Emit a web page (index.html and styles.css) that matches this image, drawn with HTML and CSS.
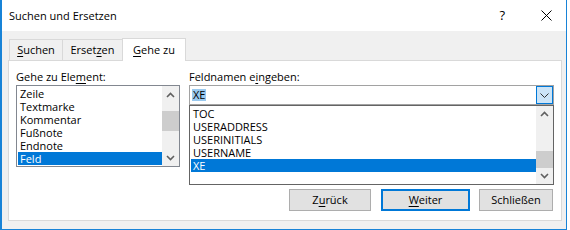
FILE: index.html
```html
<!DOCTYPE html>
<html lang="de">
<head>
<meta charset="utf-8">
<title>Suchen und Ersetzen</title>
<link rel="stylesheet" href="styles.css">
</head>
<body>
<div class="window">
  <div class="titlebar">
    <span class="title">Suchen und Ersetzen</span>
    <span class="help">?</span>
    <svg class="close" width="11" height="11" viewBox="0 0 11 11"><path d="M0.5 0.5 L10.5 10.5 M10.5 0.5 L0.5 10.5" stroke="#000" stroke-width="1" fill="none"/></svg>
  </div>
  <div class="client">
    <div class="tabs">
      <div class="tab t1"><u>S</u>uchen</div>
      <div class="tab t2">Erset<u>z</u>en</div>
      <div class="tab active"><u>G</u>ehe zu</div>
    </div>
    <div class="panel">
      <div class="col left">
        <div class="label">Gehe zu Ele<u>m</u>ent:</div>
        <div class="listbox small">
          <div class="items">
            <div class="item">Zeile</div>
            <div class="item">Textmarke</div>
            <div class="item">Kommentar</div>
            <div class="item">Fußnote</div>
            <div class="item">Endnote</div>
            <div class="item sel">Feld</div>
          </div>
          <div class="scrollbar">
            <div class="arrow"><svg width="9" height="6" viewBox="0 0 9 6"><path d="M1 5 L4.5 1.5 L8 5" stroke="#606060" stroke-width="1.6" fill="none"/></svg></div>
            <div class="track"><div class="thumb t-small"></div></div>
            <div class="arrow"><svg width="9" height="6" viewBox="0 0 9 6"><path d="M1 1 L4.5 4.5 L8 1" stroke="#606060" stroke-width="1.6" fill="none"/></svg></div>
          </div>
        </div>
      </div>
      <div class="col right">
        <div class="label">Feldnamen e<u>i</u>ngeben:</div>
        <div class="combo">
          <div class="edit"><span class="hl">XE</span></div>
          <div class="dropbtn"><svg width="9" height="5" viewBox="0 0 9 5"><path d="M0.5 0.5 L4.5 4.5 L8.5 0.5" stroke="#333" stroke-width="1" fill="none"/></svg></div>
        </div>
        <div class="listbox big">
          <div class="items">
            <div class="item">TOC</div>
            <div class="item">USERADDRESS</div>
            <div class="item">USERINITIALS</div>
            <div class="item">USERNAME</div>
            <div class="item sel">XE</div>
          </div>
          <div class="scrollbar">
            <div class="arrow"><svg width="9" height="6" viewBox="0 0 9 6"><path d="M1 5 L4.5 1.5 L8 5" stroke="#606060" stroke-width="1.6" fill="none"/></svg></div>
            <div class="track"><div class="thumb t-big"></div></div>
            <div class="arrow"><svg width="9" height="6" viewBox="0 0 9 6"><path d="M1 1 L4.5 4.5 L8 1" stroke="#606060" stroke-width="1.6" fill="none"/></svg></div>
          </div>
        </div>
        <div class="buttons">
          <div class="btn b-back">Z<u>u</u>rück</div>
          <div class="btn b-next default"><u>W</u>eiter</div>
          <div class="btn b-close">Schließen</div>
        </div>
      </div>
    </div>
  </div>
</div>
</body>
</html>
```

FILE: styles.css
```css
* { box-sizing: border-box; margin: 0; padding: 0; }
html, body { width: 570px; height: 230px; overflow: hidden; background: #fff; }
body { font-family: "Open Sans", "Noto Sans", sans-serif; font-size: 11px; color: #000; }
u { text-decoration: underline; text-underline-offset: 2px; }

.window {
  width: 567px; height: 230px;
  border-left: 2px solid #1883d7;
  border-right: 1px solid #1883d7;
  border-bottom: 1px solid #1883d7;
  display: flex; flex-direction: column;
}
.titlebar { height: 31px; background: #fff; display: flex; align-items: center; padding-left: 7px; }
.title { flex: 1; line-height: 31px; }
.help { font-size: 13px; line-height: 31px; margin-right: 36px; }
.close { margin-right: 14px; }

.client { height: 198px; background: #f0f0f0; padding: 7px 0 0 6px; }
.tabs { display: flex; align-items: flex-end; height: 22px; margin-left: 1px; }
.tab {
  height: 21px; line-height: 20px; text-align: center;
  border: 1px solid #d9d9d9; border-bottom: none; background: #f0f0f0;
}
.t1 { width: 54px; }
.t2 { width: 61px; margin-left: -1px; }
.tab.active {
  width: 64px; height: 23px; margin-left: -1px; margin-bottom: -1px;
  line-height: 22px; background: #fff; position: relative; z-index: 1;
}

.panel {
  width: 554px; height: 161px; border: 1px solid #d9d9d9; background: #fff;
  display: flex; padding: 7px 0 0 7px;
}
.col { display: flex; flex-direction: column; }
.left { width: 164px; }
.right { width: 365px; margin-left: 9px; }
.label { height: 17px; line-height: 17px; white-space: nowrap; }

.listbox { display: flex; background: #fff; }
.listbox.small { height: 82px; border: 1px solid #828790; }
.listbox.big { height: 80px; border: 1px solid #646464; }
.items { flex: 1; padding: 1px 0 0 1px; }
.item { height: 13px; line-height: 13px; padding-left: 2px; white-space: nowrap; }
.item.sel { background: #0078d7; color: #fff; }

.scrollbar { width: 17px; background: #f0f0f0; display: flex; flex-direction: column; }
.arrow { height: 17px; display: flex; align-items: center; justify-content: center; }
.track { flex: 1; }
.thumb { background: #cdcdcd; height: 20px; }
.t-small { margin-top: 8px; }
.t-big { margin-top: 28px; height: 17px; }

.combo { height: 20px; border: 1px solid #a2a2a2; display: flex; }
.edit { flex: 1; display: flex; align-items: center; padding-left: 2px; }
.hl { background: #99c9ef; line-height: 12px; padding: 0 1px; }
.dropbtn {
  width: 17px; height: 18px; border: 1px solid #0078d7; background: #cce4f7;
  display: flex; align-items: center; justify-content: center;
}

.buttons { display: flex; justify-content: flex-end; margin-top: 4px; padding-right: 1px; }
.btn {
  height: 22px; line-height: 20px; text-align: center;
  background: #e1e1e1; border: 1px solid #adadad;
}
.b-back { width: 82px; margin-right: 10px; }
.b-next { width: 89px; margin-right: 9px; }
.b-close { width: 74px; }
.btn.default { border: 2px solid #0078d7; line-height: 18px; }
```
